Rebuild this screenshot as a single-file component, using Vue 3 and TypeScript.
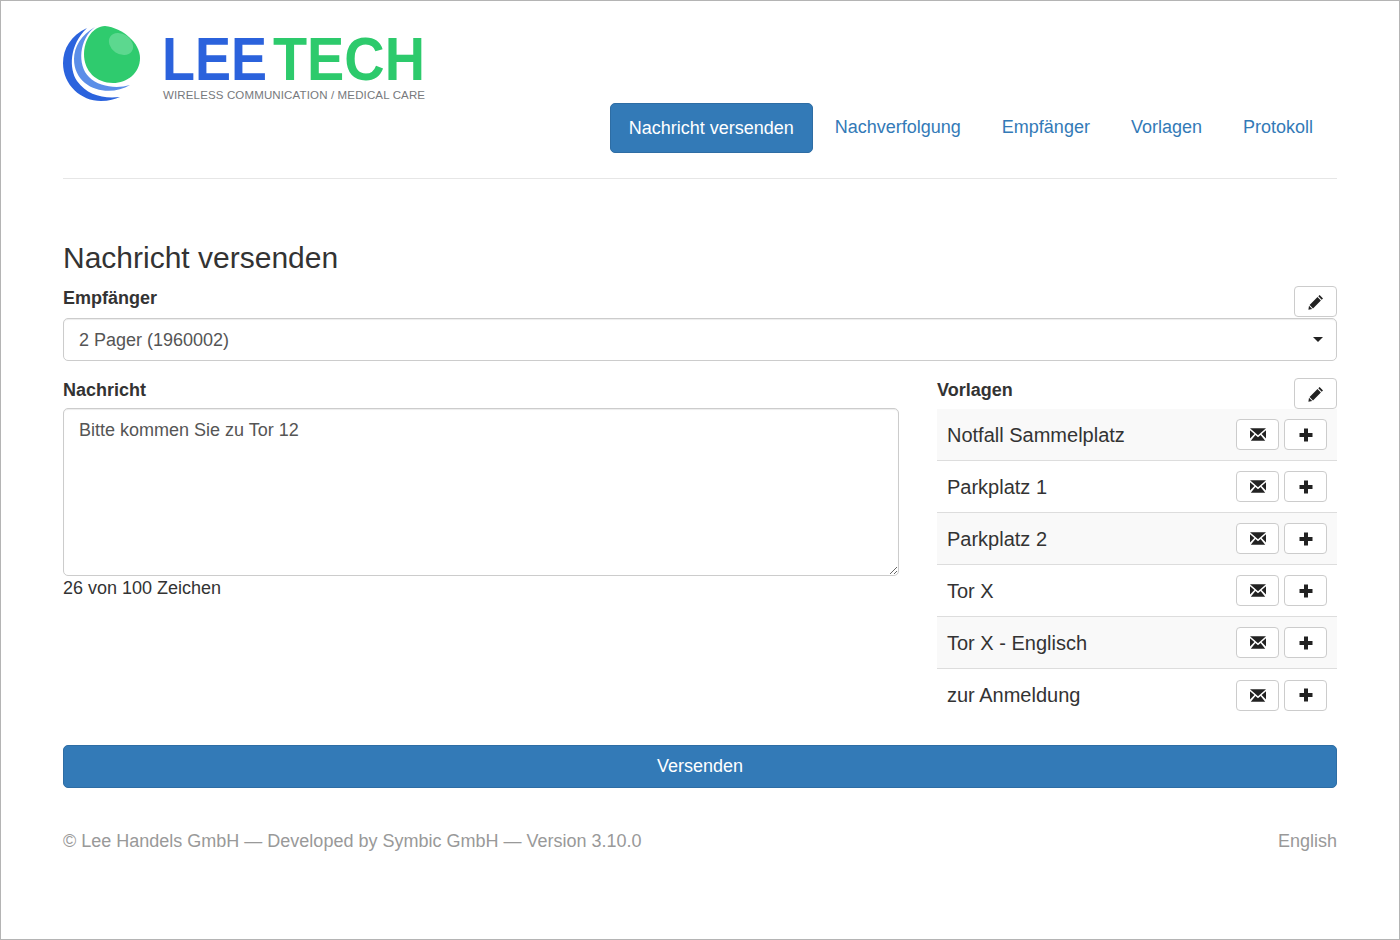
<script setup lang="ts">
import { computed, ref } from 'vue'

const navItems = ['Nachricht versenden', 'Nachverfolgung', 'Empfänger', 'Vorlagen', 'Protokoll']
const activeNav = ref('Nachricht versenden')
const recipient = ref('2 Pager (1960002)')
const message = ref('Bitte kommen Sie zu Tor 12')
const maxLength = 100
const counter = computed(() => `${message.value.length} von ${maxLength} Zeichen`)
const templates = ['Notfall Sammelplatz', 'Parkplatz 1', 'Parkplatz 2', 'Tor X', 'Tor X - Englisch', 'zur Anmeldung']
</script>

<template>
  <div class="page">
    <header class="header">
      <svg class="logo" width="364" height="78" viewBox="0 0 364 78" role="img" aria-label="Lee Tech">
        <path fill="#2b63dd" d="M24 3C8 10 0 24 0 38c0 22 18 38 38 38 8 0 14-2 19-4-17 2-33-2-43-16C6 44 6 20 24 3Z" />
        <path fill="#5b8ee8" d="M32 2C18 10 11 22 11 34c0 10 4 18 11 24 12 10 32 10 45 2-13 4-31 2-41-8C14 40 16 14 32 2Z" />
        <path fill="#2fcb6e" d="M42 1c18 2 35 17 35 32 0 15-13 25-27 25-17 0-29-12-29-29C21 15 30 1 42 1Z" />
        <ellipse cx="58" cy="19" rx="13" ry="10" fill="#5cd88f" transform="rotate(35 58 19)" />
        <text class="logo-word logo-lee" x="99" y="55" textLength="105" lengthAdjust="spacingAndGlyphs">LEE</text>
        <text class="logo-word logo-tech" x="210" y="55" textLength="152" lengthAdjust="spacingAndGlyphs">TECH</text>
        <text class="logo-tag" x="100" y="74" textLength="262" lengthAdjust="spacing">WIRELESS COMMUNICATION / MEDICAL CARE</text>
      </svg>
      <nav class="nav">
        <a
          v-for="item in navItems"
          :key="item"
          href="#"
          class="nav-link"
          :class="{ active: item === activeNav }"
          @click.prevent="activeNav = item"
        >{{ item }}</a>
      </nav>
    </header>

    <main class="main">
      <h1 class="title">Nachricht versenden</h1>

      <div class="label-row recipient-label">
        <label class="label" for="recipient">Empfänger</label>
        <button class="btn btn-edit" type="button" aria-label="Empfänger bearbeiten">
          <svg class="icon" width="16" height="16" viewBox="0 0 16 16"><path fill="#222" d="M11.6 1 15 4.400 13.700 5.700 10.300 2.300ZM9.500 3.100 12.900 6.500 5 14.400 1.600 11ZM1 11.800 4.200 15 .4 15.700Z" /></svg>
        </button>
      </div>
      <div class="select-wrap">
        <select id="recipient" v-model="recipient" class="control select">
          <option>2 Pager (1960002)</option>
        </select>
        <span class="caret"></span>
      </div>

      <div class="columns">
        <section class="message">
          <label class="label message-label" for="message">Nachricht</label>
          <textarea id="message" v-model="message" class="control textarea" :maxlength="maxLength"></textarea>
          <p class="counter">{{ counter }}</p>
        </section>

        <section class="templates">
          <div class="label-row templates-label">
            <span class="label">Vorlagen</span>
            <button class="btn btn-edit" type="button" aria-label="Vorlagen bearbeiten">
              <svg class="icon" width="16" height="16" viewBox="0 0 16 16"><path fill="#222" d="M11.6 1 15 4.400 13.700 5.700 10.300 2.300ZM9.500 3.100 12.900 6.500 5 14.400 1.600 11ZM1 11.800 4.200 15 .4 15.700Z" /></svg>
            </button>
          </div>
          <ul class="template-list">
            <li v-for="name in templates" :key="name" class="template-row">
              <span class="template-name">{{ name }}</span>
              <button class="btn btn-row" type="button" aria-label="Senden">
                <svg class="icon" width="16" height="13" viewBox="0 0 16 13"><path fill="#222" d="M0 .2h16L8 7.200ZM0 2.200 4.400 6 0 10.400ZM16 2.200 11.600 6 16 10.400ZM.8 12.800 5.400 7 8 9.200 10.600 7 15.200 12.800Z" /></svg>
              </button>
              <button class="btn btn-row" type="button" aria-label="Einfügen">
                <svg class="icon" width="14" height="14" viewBox="0 0 14 14"><path fill="#222" d="M5 .5h4V5h4.500v4H9v4.500H5V9H.5V5H5Z" /></svg>
              </button>
            </li>
          </ul>
        </section>
      </div>

      <button class="submit" type="button">Versenden</button>
    </main>

    <footer class="footer">
      <span>© Lee Handels GmbH — Developed by Symbic GmbH — Version 3.10.0</span>
      <a href="#" class="lang" @click.prevent>English</a>
    </footer>
  </div>
</template>

<style scoped>
.page {
  box-sizing: border-box;
  height: 940px;
  padding: 0 62px;
  border: 1px solid #b4b4b4;
  background: #fff;
  color: #333;
  font-family: "Liberation Sans", Arial, sans-serif;
  font-size: 18px;
  line-height: 26px;
}

.header {
  position: relative;
  display: flex;
  align-items: flex-end;
  justify-content: flex-end;
  box-sizing: border-box;
  height: 178px;
  padding: 0 5px 25px 0;
  border-bottom: 1px solid #e6e6e6;
}

.logo {
  position: absolute;
  top: 24px;
  left: 0;
}

.logo-word {
  font-family: "Liberation Sans", Arial, sans-serif;
  font-size: 62px;
  font-weight: 700;
}

.logo-lee { fill: #2b62dc; }
.logo-tech { fill: #2dca6c; }

.logo-tag {
  fill: #77797c;
  font-family: "Liberation Sans", Arial, sans-serif;
  font-size: 11.500px;
}

.nav {
  display: flex;
  gap: 3px;
}

.nav-link {
  padding: 11px 19px;
  border-radius: 5px;
  color: #337ab7;
  text-decoration: none;
}

.nav-link.active {
  padding: 11px 18px;
  border: 1px solid #2e6da4;
  background: #337ab7;
  color: #fff;
}

.main {
  padding-top: 64px;
}

.title {
  margin: 0;
  color: #333;
  font-size: 30px;
  font-weight: 400;
  line-height: 30px;
}

.label {
  color: #333;
  font-weight: 700;
}

.label-row {
  display: flex;
  align-items: flex-start;
  justify-content: space-between;
}

.recipient-label {
  height: 32px;
  margin-top: 13px;
  line-height: 24px;
}

.recipient-label .label {
  padding-top: 0;
}

.btn {
  display: inline-flex;
  align-items: center;
  justify-content: center;
  box-sizing: border-box;
  padding: 0;
  border: 1px solid #ccc;
  border-radius: 4px;
  background: #fff;
}

.btn-edit {
  width: 43px;
  height: 31px;
}

.icon {
  display: block;
}

.control {
  box-sizing: border-box;
  width: 100%;
  padding: 8px 15px;
  border: 1px solid #ccc;
  border-radius: 5px;
  background: #fff;
  box-shadow: inset 0 1px 1px rgba(0, 0, 0, 0.075);
  color: #555;
  font-family: inherit;
  font-size: 18px;
  line-height: 26px;
}

.select-wrap {
  position: relative;
}

.select {
  display: block;
  height: 43px;
  appearance: none;
}

.caret {
  position: absolute;
  top: 19px;
  right: 14px;
  border-top: 5px solid #222;
  border-right: 5px solid transparent;
  border-left: 5px solid transparent;
}

.columns {
  display: grid;
  grid-template-columns: 836px 400px;
  gap: 38px;
  margin-top: 17px;
}

.message-label {
  display: block;
  height: 30px;
  line-height: 24px;
}

.textarea {
  display: block;
  height: 168px;
  resize: vertical;
}

.counter {
  margin: 0;
  line-height: 24px;
}

.templates-label {
  height: 31px;
  line-height: 24px;
}

.template-list {
  margin: 0;
  padding: 0;
  list-style: none;
}

.template-row {
  display: flex;
  align-items: center;
  gap: 5px;
  box-sizing: border-box;
  height: 52px;
  padding: 0 10px;
  border-bottom: 1px solid #ddd;
}

.template-row:nth-child(odd) {
  background: #f9f9f9;
}

.template-row:last-child {
  border-bottom: 0;
}

.template-name {
  flex: 1;
  font-size: 20px;
}

.btn-row {
  width: 43px;
  height: 31px;
}

.submit {
  display: block;
  box-sizing: border-box;
  width: 100%;
  height: 43px;
  margin-top: 24px;
  border: 1px solid #2e6da4;
  border-radius: 5px;
  background: #337ab7;
  color: #fff;
  font-family: inherit;
  font-size: 18px;
}

.footer {
  display: flex;
  justify-content: space-between;
  margin-top: 40px;
  color: #999;
}

.lang {
  color: #999;
  text-decoration: none;
}
</style>

<style>
html,
body {
  margin: 0;
}
</style>
